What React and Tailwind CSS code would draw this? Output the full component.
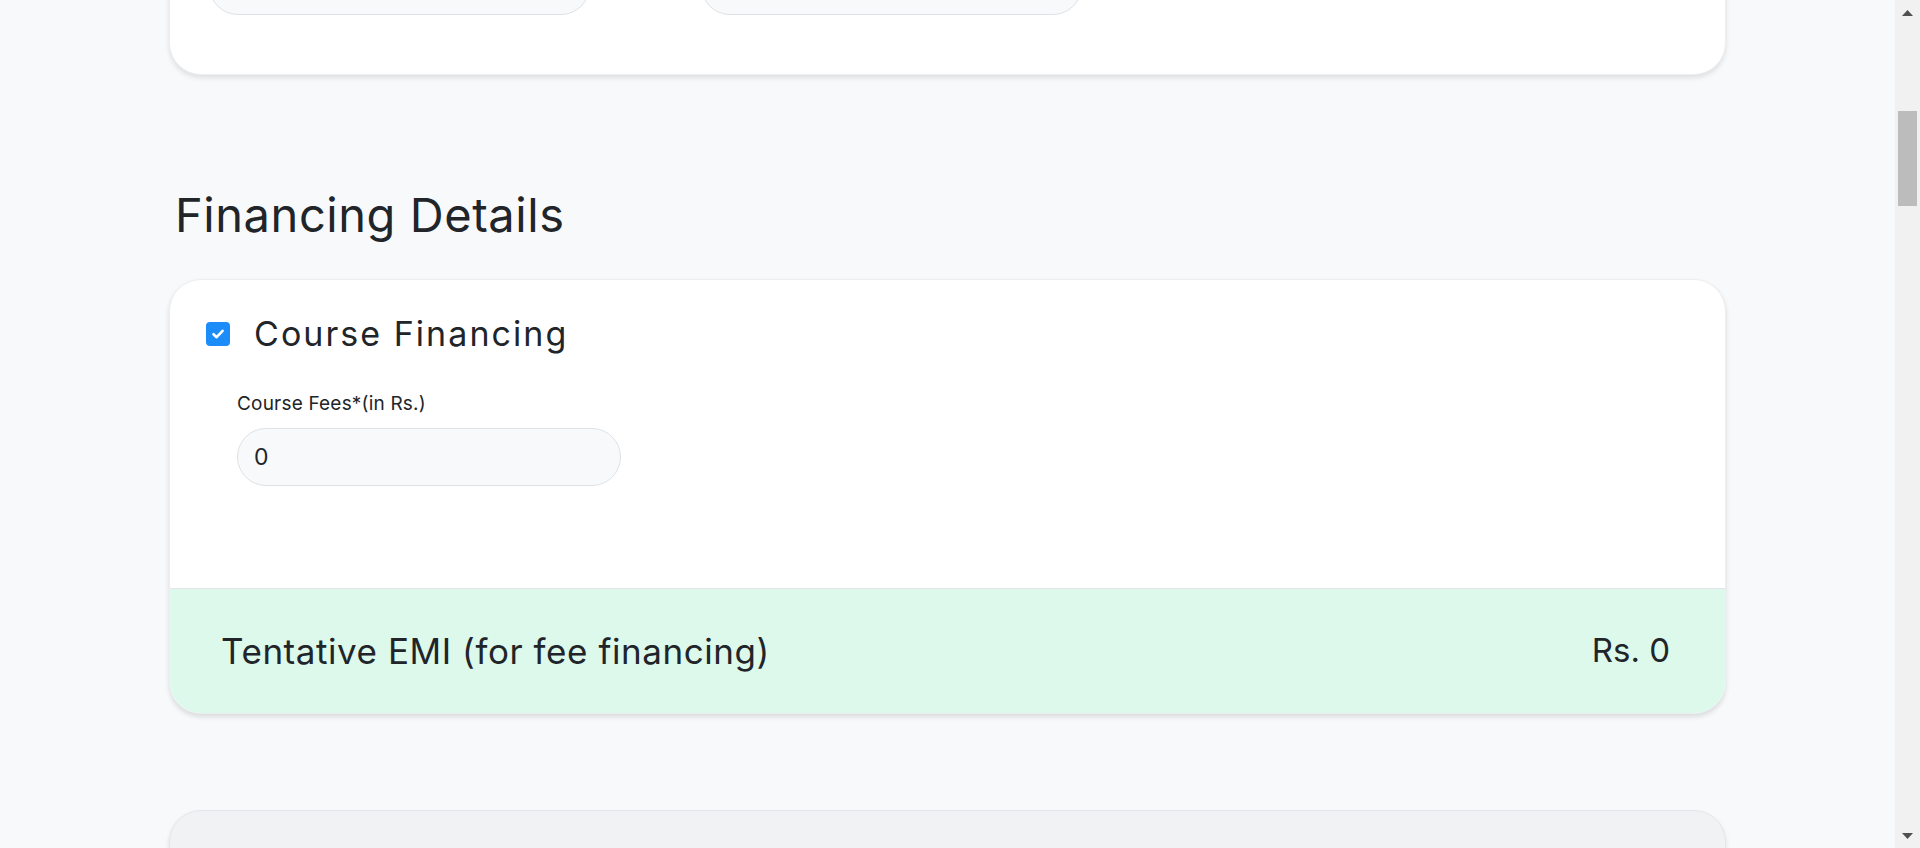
import { useLayoutEffect, useRef } from "react";

function Field({ label, value }) {
  return (
    <div className="flex flex-col gap-[12px]">
      <label className="text-[19px] leading-[24px] text-[#212529]">{label}</label>
      <div className="h-[58px] w-[381px] rounded-full border border-[#dee2e6] bg-[#f8f9fa] flex items-center px-[19px] text-[22px] text-[#212529]">
        {value}
      </div>
    </div>
  );
}

function Check() {
  return (
    <div className="w-[24px] h-[24px] rounded-[4px] bg-[#1c8cf8] flex items-center justify-center shrink-0">
      <svg width="16" height="16" viewBox="0 0 16 16" fill="none">
        <path d="M3.5 8.2 L6.6 11.2 L12.6 4.8" stroke="white" strokeWidth="2.6" strokeLinecap="round" strokeLinejoin="round" />
      </svg>
    </div>
  );
}

function ScrollBar() {
  return (
    <div className="fixed top-0 right-0 w-[25px] h-screen bg-[#f1f1f1] flex flex-col items-center">
      <div className="h-[25px] w-full flex items-center justify-center">
        <svg width="11" height="6" viewBox="0 0 11 6">
          <path d="M0 6 L5.5 0 L11 6 Z" fill="#505050" />
        </svg>
      </div>
      <div className="mt-[86px] w-[19px] h-[95px] bg-[#bcbcbc]" />
      <div className="flex-1" />
      <div className="h-[25px] w-full flex items-center justify-center">
        <svg width="11" height="6" viewBox="0 0 11 6">
          <path d="M0 0 L5.5 6 L11 0 Z" fill="#505050" />
        </svg>
      </div>
    </div>
  );
}

export default function App() {
  const anchor = useRef(null);
  useLayoutEffect(() => {
    const a = anchor.current;
    if (a) {
      const top = a.getBoundingClientRect().top + window.scrollY;
      window.scrollTo(0, top - 279);
    }
  }, []);

  return (
    <div className="min-h-[7266px] bg-[#f8f9fa] text-[#212529] font-['Inter','Noto_Sans',sans-serif] pt-[48px] pb-[80px]">
      <div className="w-[1557px] ml-[169px] flex flex-col">
        {/* Previous section */}
        <h2 className="px-[6px] text-[47px] leading-[56px] tracking-[0.012em]">Academic Details</h2>
        <div className="mt-[40px] rounded-[32px] border border-[#eceef0] bg-white shadow-[0_3px_5px_rgba(0,0,0,0.10)] px-[39px] pt-[44px] pb-[59px]">
          <div className="grid grid-cols-[381px_381px] gap-x-[111px] gap-y-[36px]">
            <Field label="Institute Name*" value="Indian Institute of Technology" />
            <Field label="Course Name*" value="B.Tech" />
            <Field label="Course Duration*(in months)" value="48" />
            <Field label="Course Start Date*" value="01-08-2024" />
            <Field label="Degree Type*" value="Undergraduate" />
            <Field label="Specialisation*" value="Computer Science" />
            <Field label="Stream*" value="Engineering" />
            <Field label="Admission Status*" value="" />
          </div>
        </div>

        {/* Financing Details */}
        <h2 className="mt-[112px] px-[6px] text-[47px] leading-[56px] tracking-[0.012em]">Financing Details</h2>
        <div
          ref={anchor}
          className="mt-[36px] rounded-[32px] border border-[#eceef0] bg-white shadow-[0_3px_5px_rgba(0,0,0,0.12)] overflow-hidden"
        >
          <div className="pl-[36px] pt-[36px] pb-[102px]">
            <div className="flex items-center gap-[24px]">
              <Check />
              <span className="text-[34px] leading-[36px] tracking-[0.06em]">Course Financing</span>
            </div>
            <div className="mt-[40px] ml-[31px] flex flex-col gap-[12px]">
              <label className="text-[19px] leading-[24px] tracking-[0.01em]">Course Fees*(in Rs.)</label>
              <div className="h-[58px] w-[384px] rounded-full border border-[#dee2e6] bg-[#f8f9fa] flex items-center pl-[16px] text-[23px]">
                0
              </div>
            </div>
          </div>
          <div className="h-[125px] border-t border-[#e3e6e8] bg-[#ddf9ec] flex items-center justify-between pl-[51px] pr-[55px]">
            <span className="text-[35px] tracking-[0.016em]">Tentative EMI (for fee financing)</span>
            <span className="text-[33px]">Rs. 0</span>
          </div>
        </div>

        {/* Next section */}
        <div className="mt-[96px] h-[420px] rounded-[32px] border border-[#e4e6e9] bg-[#f1f2f4] shadow-[0_3px_5px_rgba(0,0,0,0.10)]" />
      </div>
      <ScrollBar />
    </div>
  );
}
